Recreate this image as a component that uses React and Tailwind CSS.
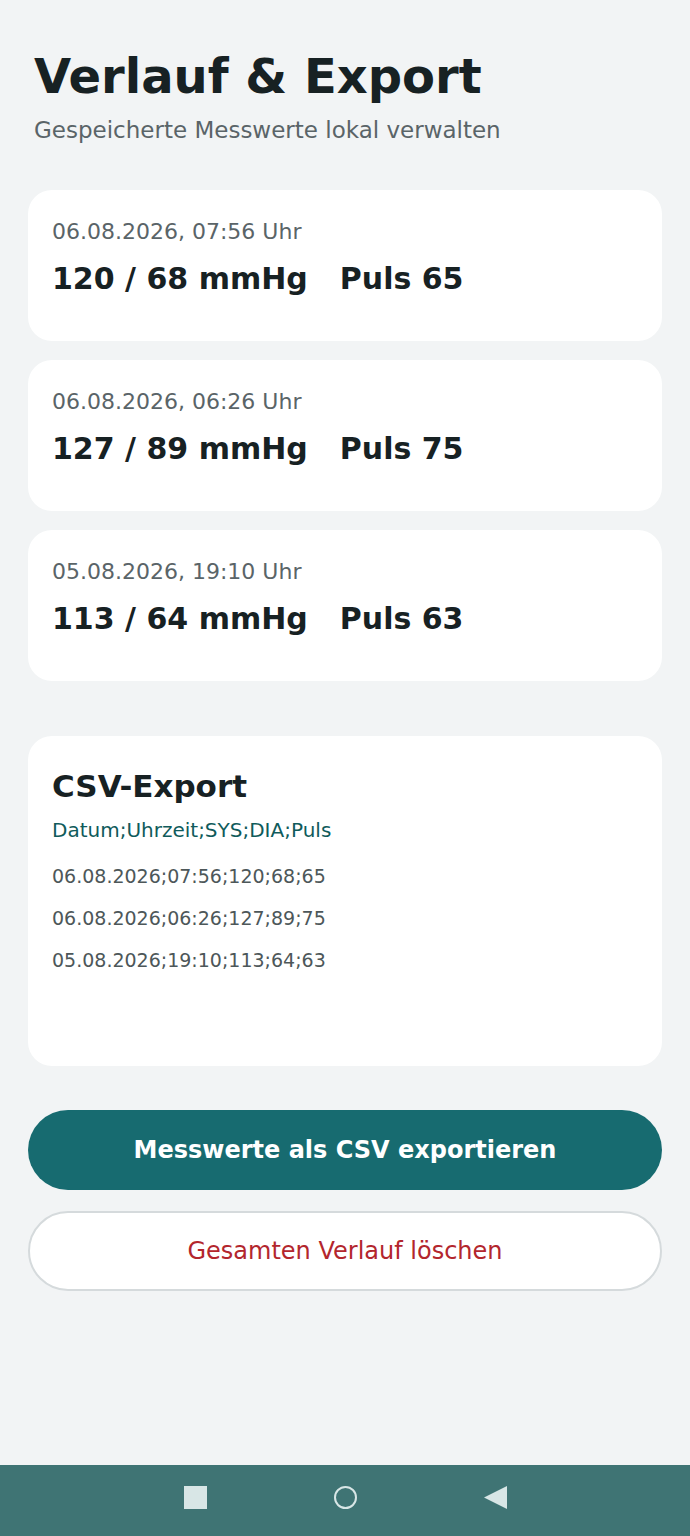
import React from "react";

const entries = [
  { date: "06.08.2026, 07:56 Uhr", sys: 120, dia: 68, pulse: 65 },
  { date: "06.08.2026, 06:26 Uhr", sys: 127, dia: 89, pulse: 75 },
  { date: "05.08.2026, 19:10 Uhr", sys: 113, dia: 64, pulse: 63 },
];

const csvRows = [
  "06.08.2026;07:56;120;68;65",
  "06.08.2026;06:26;127;89;75",
  "05.08.2026;19:10;113;64;63",
];

export default function App() {
  return (
    <div
      className="flex min-h-[1536px] w-full flex-col bg-[#f2f4f5] text-[#172123]"
      style={{ fontFamily: '"DejaVu Sans", sans-serif' }}
    >
      <main className="flex flex-1 flex-col px-[28px]">
        <header className="px-[6px] pt-[52px]">
          <h1 className="text-[48px] font-bold leading-[48px] text-[#172123]">Verlauf &amp; Export</h1>
          <p className="mt-[14px] text-[23px] leading-[32px] text-[#5a6468]">
            Gespeicherte Messwerte lokal verwalten
          </p>
        </header>

        <section className="mt-[44px] flex flex-col gap-[19px]">
          {entries.map((e) => (
            <div key={e.date} className="h-[151px] rounded-[24px] bg-white px-[24px] pt-[27px]">
              <div className="text-[22px] leading-[30px] text-[#5a6468]">{e.date}</div>
              <div className="mt-[14px] flex gap-[32px] text-[30px] font-bold leading-[36px] text-[#172123]">
                <span>
                  {e.sys} / {e.dia} mmHg
                </span>
                <span>Puls {e.pulse}</span>
              </div>
            </div>
          ))}
        </section>

        <section className="mt-[55px] h-[330px] rounded-[24px] bg-white px-[24px] pt-[32px]">
          <h2 className="text-[31px] font-bold leading-[36px] text-[#172123]">CSV-Export</h2>
          <div className="mt-[12px] text-[20px] leading-[28px] text-[#0f5b5b]">Datum;Uhrzeit;SYS;DIA;Puls</div>
          <div className="mt-[19px] flex flex-col gap-[16px]">
            {csvRows.map((r) => (
              <div key={r} className="text-[19px] leading-[26px] text-[#4d5759]">
                {r}
              </div>
            ))}
          </div>
        </section>

        <div className="mt-[44px] flex flex-col gap-[21px]">
          <button className="flex h-[80px] items-center justify-center rounded-full bg-[#176b70] text-[24px] font-bold text-white">
            Messwerte als CSV exportieren
          </button>
          <button className="flex h-[80px] items-center justify-center rounded-full border-2 border-[#d5dadc] bg-white text-[24px] text-[#b3262d]">
            Gesamten Verlauf löschen
          </button>
        </div>
      </main>

      <nav className="flex h-[71px] items-center justify-center gap-[127px] bg-[#3f7474] pb-[7px]">
        <span className="block h-[23px] w-[23px] bg-[#d8e6e6]" />
        <span className="block h-[23px] w-[23px] rounded-full border-2 border-[#d8e6e6]" />
        <svg width="23" height="23" viewBox="0 0 23 23">
          <polygon points="0,11.5 23,0 23,23" fill="#d8e6e6" />
        </svg>
      </nav>
    </div>
  );
}
